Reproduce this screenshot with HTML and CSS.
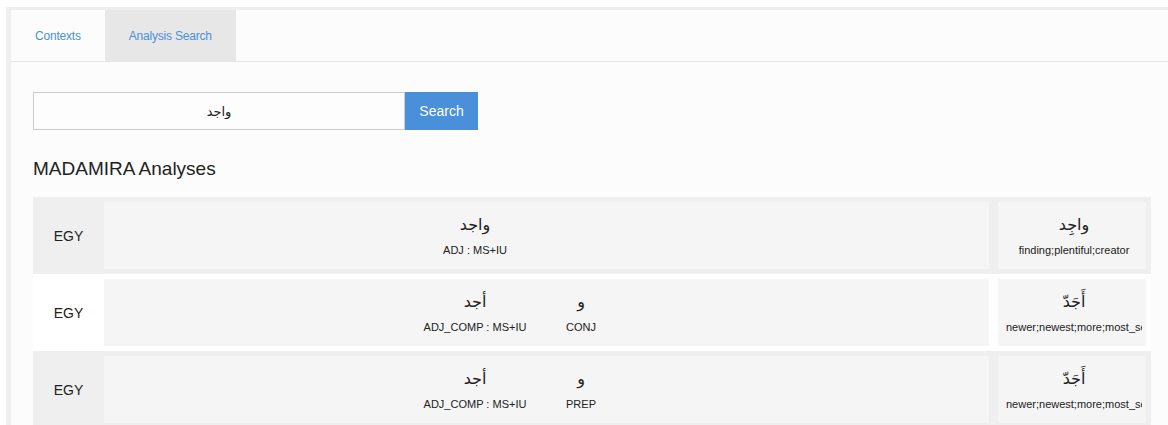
FILE: index.html
```html
<!DOCTYPE html>
<html lang="en">
<head>
<meta charset="utf-8">
<title>MADAMIRA Analysis Search</title>
<link rel="stylesheet" href="styles.css">
</head>
<body>
<div class="page">
  <div class="panel">
    <nav class="tabs">
      <a class="tab">Contexts</a>
      <a class="tab active">Analysis Search</a>
    </nav>
    <main class="content">
      <form class="search-row">
        <input class="search-input" type="text" value="واجد" dir="rtl">
        <button class="search-btn" type="button">Search</button>
      </form>
      <h2 class="section-title">MADAMIRA Analyses</h2>
      <div class="analyses">
        <div class="row">
          <div class="dialect">EGY</div>
          <div class="segments">
            <div class="seg seg-stem">
              <div class="ar">واجد</div>
              <div class="tag">ADJ : MS+IU</div>
            </div>
          </div>
          <div class="gloss">
            <div class="ar">واجِد</div>
            <div class="tag">finding;plentiful;creator</div>
          </div>
        </div>
        <div class="row">
          <div class="dialect">EGY</div>
          <div class="segments">
            <div class="seg seg-stem">
              <div class="ar">أجد</div>
              <div class="tag">ADJ_COMP : MS+IU</div>
            </div>
            <div class="seg seg-proclitic">
              <div class="ar">و</div>
              <div class="tag">CONJ</div>
            </div>
          </div>
          <div class="gloss">
            <div class="ar">أَجَدّ</div>
            <div class="tag">newer;newest;more;most_serious;more_earnest</div>
          </div>
        </div>
        <div class="row">
          <div class="dialect">EGY</div>
          <div class="segments">
            <div class="seg seg-stem">
              <div class="ar">أجد</div>
              <div class="tag">ADJ_COMP : MS+IU</div>
            </div>
            <div class="seg seg-proclitic">
              <div class="ar">و</div>
              <div class="tag">PREP</div>
            </div>
          </div>
          <div class="gloss">
            <div class="ar">أَجَدّ</div>
            <div class="tag">newer;newest;more;most_serious;more_earnest</div>
          </div>
        </div>
      </div>
    </main>
  </div>
</div>
</body>
</html>
```
FILE: styles.css
```css
html, body {
  margin: 0;
  padding: 0;
  background: #ffffff;
  overflow: hidden;
}

body {
  font-family: "Liberation Sans", Arial, sans-serif;
  color: #222;
}

.page {
  padding: 7px 0 0 6px;
}

.panel {
  width: 1190px;
  min-height: 460px;
  background: #fcfcfc;
  border-top: 3px solid #efefef;
  border-left: 5px solid #efefef;
}

/* tab strip */
.tabs {
  display: flex;
  height: 51px;
  border-bottom: 1px solid #e6e6e6;
}

.tab {
  display: flex;
  align-items: center;
  padding: 0 24px;
  font-size: 12px;
  letter-spacing: -0.2px;
  color: #4a90d9;
  cursor: pointer;
}

.tab.active {
  background: #e7e7e7;
}

.content {
  padding: 30px 22px 0 22px;
}

/* search form */
.search-row {
  display: flex;
  height: 38px;
  margin: 0;
}

.search-input {
  box-sizing: border-box;
  width: 372px;
  height: 38px;
  margin: 0;
  border: 1px solid #cccccc;
  background: #fdfdfd;
  font-family: "DejaVu Sans", sans-serif;
  font-size: 13px;
  color: #222;
  text-align: center;
  outline: none;
}

.search-btn {
  width: 73px;
  height: 38px;
  margin: 0;
  border: none;
  background: #4a8fd9;
  color: #fff;
  font-family: "Liberation Sans", Arial, sans-serif;
  font-size: 14px;
  padding: 0 0 1px;
}

.section-title {
  margin: 28px 0 17px;
  font-size: 19px;
  line-height: 22px;
  font-weight: normal;
  color: #222;
}

/* analyses table */
.analyses {
  width: 1118px;
}

.row {
  display: flex;
  height: 77px;
  background: #ffffff;
}

.row:nth-child(odd) {
  background: #efefef;
}

.dialect {
  flex: 0 0 71px;
  display: flex;
  align-items: center;
  justify-content: center;
  font-size: 14px;
  color: #222;
}

.segments {
  flex: 1;
  margin: 5px 0;
  background: #f5f5f5;
  display: grid;
  grid-template-columns: repeat(8, 106px);
  align-content: start;
  padding-top: 11px;
}

.seg {
  grid-row: 1;
  text-align: center;
}

.seg-stem {
  grid-column: 4;
}

.seg-proclitic {
  grid-column: 5;
}

.gloss {
  flex: 0 0 148px;
  margin: 5px 5px 5px 9px;
  padding: 11px 4px 0 8px;
  background: #f5f5f5;
  box-sizing: border-box;
  text-align: center;
  overflow: hidden;
  white-space: nowrap;
}

.ar {
  font-family: "DejaVu Sans", sans-serif;
  font-size: 16px;
  line-height: 24px;
  color: #222;
}

.tag {
  margin-top: 6px;
  font-size: 11px;
  line-height: 14px;
  color: #222;
  white-space: nowrap;
}

.gloss .tag {
  overflow: hidden;
}
```
